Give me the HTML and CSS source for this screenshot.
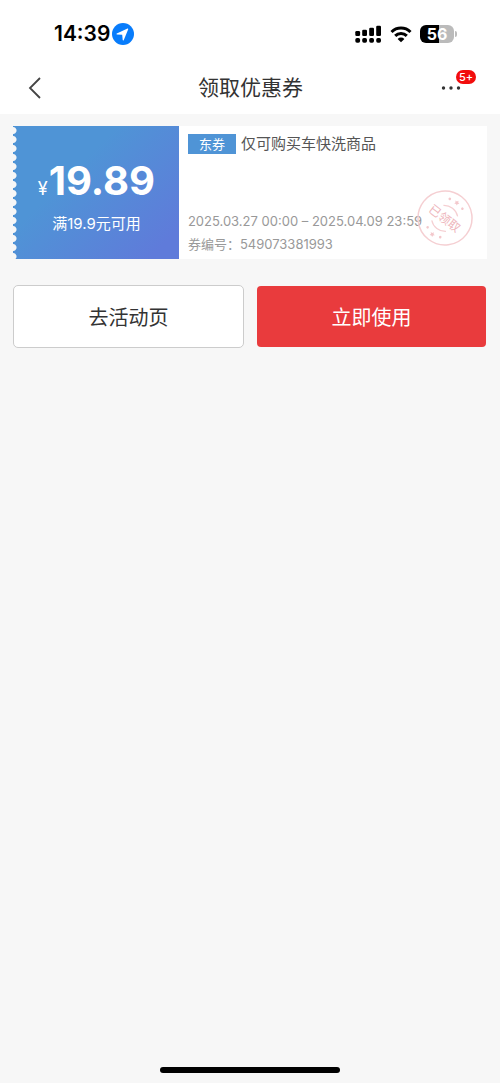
FILE: index.html
```html
<!DOCTYPE html>
<html lang="zh-CN">
<head>
<meta charset="utf-8">
<meta name="viewport" content="width=device-width, initial-scale=1">
<title>领取优惠券</title>
<link rel="stylesheet" href="styles.css">
</head>
<body>
<header class="top">
  <div class="status">
    <div class="status-left">
      <span class="time">14:39</span>
      <svg class="location" viewBox="0 0 22 22" aria-hidden="true"><circle cx="11" cy="11" r="11" fill="#087cfb"/><path d="M15.500 5.500 4.800 10.400c-.5.3-.4.900.1 1l5.300.4.500 5.300c.1.500.7.600 1 .1L16.200 6.200c.2-.5-.2-.9-.7-.7Z" fill="#fff"/></svg>
    </div>
    <div class="status-right">
      <svg class="signal" viewBox="0 0 27 20" aria-hidden="true"><g fill="#000"><rect x="0.300" y="7" width="4.800" height="5" rx="1.300"/><rect x="7.200" y="5.800" width="4.800" height="6.200" rx="1.300"/><rect x="14.200" y="3.800" width="4.800" height="8.200" rx="1.300"/><rect x="21.200" y="1.800" width="4.800" height="10.200" rx="1.300"/><rect x="0.300" y="14" width="4.800" height="4.800" rx="1.700"/><rect x="7.200" y="14" width="4.800" height="4.800" rx="1.700"/><rect x="14.200" y="14" width="4.800" height="4.800" rx="1.700"/><rect x="21.200" y="14" width="4.800" height="4.800" rx="1.700"/></g></svg>
      <svg class="wifi" viewBox="0 0 22 17" aria-hidden="true"><path d="M1.500 6a13.500 13.500 0 0 1 19 0M5.200 9.900a8.200 8.200 0 0 1 11.600 0" fill="none" stroke="#000" stroke-width="3"/><path d="M7.600 12.900a4.900 4.900 0 0 1 6.800 0L11 16.300Z" fill="#000"/></svg>
      <div class="battery"><span class="level">56</span></div>
    </div>
  </div>
  <nav class="nav">
    <button class="icon-button" type="button" aria-label="返回"><svg class="back" viewBox="0 0 14 24" aria-hidden="true"><path d="M12 2 2 12l10 10" fill="none" stroke="#444" stroke-width="1.800"/></svg></button>
    <h1 class="title">领取优惠券</h1>
    <button class="icon-button more" type="button" aria-label="更多"><svg class="dots" viewBox="0 0 20 4" aria-hidden="true"><g fill="#333"><circle cx="2.500" cy="2" r="1.700"/><circle cx="10" cy="2" r="1.700"/><circle cx="17.500" cy="2" r="1.700"/></g></svg><span class="badge">5+</span></button>
  </nav>
</header>
<main class="content">
  <section class="coupon">
    <div class="value">
      <div class="amount"><span class="currency">¥</span><span>19.89</span></div>
      <div class="condition">满19.9元可用</div>
    </div>
    <div class="details">
      <div class="scope"><span class="tag">东券</span><span>仅可购买车快洗商品</span></div>
      <div class="meta">
        <div>2025.03.27 00:00 – 2025.04.09 23:59</div>
        <div>券编号：549073381993</div>
      </div>
      <svg class="stamp" viewBox="0 0 56 56" role="img" aria-label="已领取">
        <g transform="rotate(38 28 28)">
          <circle cx="28" cy="28" r="27" fill="none" stroke="#f5cfd2" stroke-width="1.500"/>
          <path d="M19 19a14 14 0 0 1 18 0M19 38a14 14 0 0 0 18 0" fill="none" stroke="#f5cfd2" stroke-width="1.200"/>
          <text class="stamp-text" x="28" y="33" text-anchor="middle">已领取</text>
          <g fill="#f3c8cc"><circle cx="20" cy="10" r="1.300"/><path d="m28 6 .8 1.600 1.800.3-1.300 1.200.3 1.800-1.600-.8-1.600.8.300-1.800-1.300-1.200 1.800-.3Z"/><circle cx="36" cy="10" r="1.300"/><circle cx="20" cy="46" r="1.300"/><path d="m28 46 .8 1.600 1.800.3-1.300 1.200.3 1.800-1.600-.8-1.600.8.300-1.800-1.300-1.200 1.800-.3Z"/><circle cx="36" cy="46" r="1.300"/></g>
        </g>
      </svg>
    </div>
  </section>
  <div class="actions">
    <button class="action" type="button">去活动页</button>
    <button class="action primary" type="button">立即使用</button>
  </div>
</main>
<div class="home-bar"></div>
</body>
</html>
```
FILE: styles.css
```css
* { box-sizing: border-box; }
body {
  margin: 0;
  min-height: 100vh;
  display: flex;
  flex-direction: column;
  background: #f7f7f7;
  color: #333;
  font-family: Inter, "Noto Sans CJK SC", sans-serif;
}
button { font: inherit; color: inherit; cursor: pointer; }
svg { display: block; }
.top { background: #fff; }
.status {
  height: 62px;
  padding: 6px 46px 0 54px;
  display: flex;
  align-items: center;
  justify-content: space-between;
  color: #000;
}
.status-left { display: flex; align-items: center; gap: 2px; }
.status-right { display: flex; align-items: center; gap: 8px; }
.time { font-size: 21px; font-weight: 600; line-height: 24px; }
.location { width: 22px; height: 22px; }
.signal { width: 27px; height: 20px; }
.wifi { width: 22px; height: 17px; }
.battery {
  position: relative;
  width: 34px;
  height: 18px;
  border-radius: 6px;
  background: linear-gradient(90deg, #000 56%, #bbb 56%);
  color: #fff;
  text-align: center;
}
.battery::after {
  content: "";
  position: absolute;
  left: 35px;
  top: 6px;
  width: 2px;
  height: 6px;
  border-radius: 0 2px 2px 0;
  background: #bbb;
}
.level { display: block; font-size: 16px; font-weight: 700; line-height: 18px; }
.nav {
  height: 52px;
  padding: 0 27px 0 28px;
  display: flex;
  align-items: center;
  justify-content: space-between;
}
.icon-button {
  position: relative;
  width: 44px;
  height: 44px;
  padding: 0;
  border: 0;
  background: none;
  display: flex;
  align-items: center;
}
.back { width: 14px; height: 24px; }
.title { margin: 0; font-size: 21px; font-weight: 400; line-height: 30px; }
.more { justify-content: center; }
.dots { width: 20px; height: 4px; }
.badge {
  position: absolute;
  left: 27px;
  top: 4px;
  width: 20px;
  border-radius: 7px;
  background: #f20d0d;
  color: #fff;
  font-size: 11px;
  font-weight: 500;
  line-height: 14px;
}
.content { flex: 1; padding: 12px 13px; }
.coupon { min-height: 133px; display: flex; }
.value {
  width: 35%;
  flex: none;
  padding: 5px 0 0 1px;
  display: flex;
  flex-direction: column;
  align-items: center;
  justify-content: center;
  color: #fff;
  background:
    radial-gradient(circle at 0 50%, #f7f7f7 3px, transparent 4px) 0 0 / 4px 9px repeat-y,
    linear-gradient(135deg, #4f94d6 35%, #5f7bda 90%);
}
.amount { display: flex; align-items: baseline; gap: 1px; font-size: 40px; font-weight: 700; line-height: 48px; }
.currency { font-size: 18px; font-weight: 400; }
.condition { font-size: 15px; line-height: 20px; margin-top: 1px; }
.details {
  position: relative;
  flex: 1;
  min-width: 0;
  padding: 8px 8px 3px 9px;
  background: #fff;
  display: flex;
  flex-direction: column;
  justify-content: space-between;
}
.scope { display: flex; align-items: center; gap: 5px; font-size: 15px; line-height: 20px; color: #555; }
.tag { width: 48px; background: #4f94d6; color: #fff; font-size: 13px; text-align: center; }
.meta { font-size: 13px; line-height: 23px; color: #999; white-space: nowrap; }
.stamp { position: absolute; right: 14px; bottom: 13px; width: 56px; height: 56px; }
.stamp-text { font-size: 12px; font-weight: 400; fill: #eeb6bc; }
.actions { margin-top: 26px; display: flex; gap: 12px; }
.action {
  flex: 1;
  height: 63px;
  padding: 0 0 1px;
  border: 1px solid #ccc;
  border-radius: 5px;
  background: #fff;
  font-size: 20px;
}
.primary { border-color: transparent; background: #e93b3d; background-clip: padding-box; color: #fff; }
.home-bar {
  width: 36%;
  height: 6px;
  margin: 0 auto 10px;
  border-radius: 3px;
  background: #000;
}
```
